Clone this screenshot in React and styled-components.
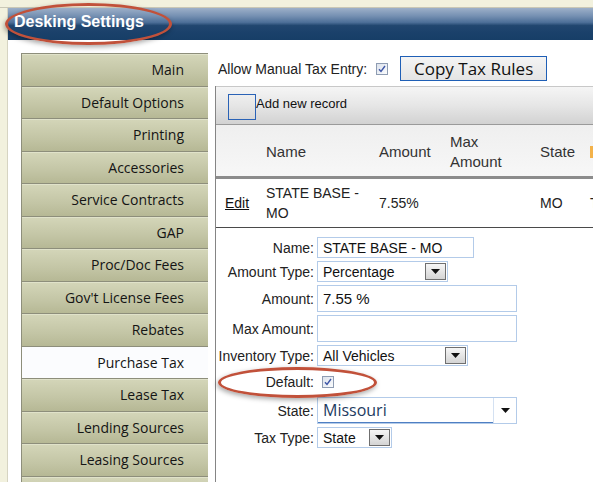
import React from 'react';
import styled, { createGlobalStyle } from 'styled-components';

const menuItems = [
  'Main',
  'Default Options',
  'Printing',
  'Accessories',
  'Service Contracts',
  'GAP',
  'Proc/Doc Fees',
  "Gov't License Fees",
  'Rebates',
  'Purchase Tax',
  'Lease Tax',
  'Lending Sources',
  'Leasing Sources',
  ''
];

const CheckIcon = () => (
  <svg width="8" height="8" viewBox="0 0 8 8">
    <path d="M1 4.2 L3 6.5 L7 1" fill="none" stroke="#3d55a6" strokeWidth="1.4" />
  </svg>
);

const Arrow = () => (
  <svg width="9" height="5" viewBox="0 0 9 5">
    <path d="M0 0 H9 L4.5 5 Z" fill="#111" />
  </svg>
);

const App = () => {
  return (
    <Page>
      <GlobalStyle />
      <TopStrip />
      <Frame>
        <Header>Desking Settings</Header>
        <Body>
          <Sidebar>
            {menuItems.map((item, i) => (
              <MenuItem key={i} $active={item === 'Purchase Tax'}>
                {item}
              </MenuItem>
            ))}
          </Sidebar>
          <Main>
            <TopRow>
              <span>Allow Manual Tax Entry:</span>
              <Checkbox $ml={9}>
                <CheckIcon />
              </Checkbox>
              <CopyButton>Copy Tax Rules</CopyButton>
            </TopRow>
            <Grid>
              <Toolbar>
                <AddBox />
                <span>Add new record</span>
              </Toolbar>
              <HeadRow>
                <Cell />
                <Cell>Name</Cell>
                <Cell>Amount</Cell>
                <Cell>
                  Max
                  <br />
                  Amount
                </Cell>
                <Cell>State</Cell>
                <Cell>
                  <SortMark />
                </Cell>
              </HeadRow>
              <DataRow>
                <EditCell>
                  <EditLink>Edit</EditLink>
                </EditCell>
                <Cell>
                  STATE BASE -
                  <br />
                  MO
                </Cell>
                <Cell>7.55%</Cell>
                <Cell />
                <Cell>MO</Cell>
                <Cell>Tax</Cell>
              </DataRow>
              <Form>
                <Label>Name:</Label>
                <TextBox $w={157} $h={21}>STATE BASE - MO</TextBox>

                <Label>Amount Type:</Label>
                <Select $w={131}>
                  <span>Percentage</span>
                  <DropButton>
                    <Arrow />
                  </DropButton>
                </Select>

                <Label>Amount:</Label>
                <TextBox $w={200} $h={27} $size={15}>7.55 %</TextBox>

                <Label>Max Amount:</Label>
                <TextBox $w={200} $h={27} />

                <Label>Inventory Type:</Label>
                <Select $w={151}>
                  <span>All Vehicles</span>
                  <DropButton>
                    <Arrow />
                  </DropButton>
                </Select>

                <Label>Default:</Label>
                <CheckWrap>
                  <Checkbox $ml={5}>
                    <CheckIcon />
                  </Checkbox>
                </CheckWrap>

                <Label>State:</Label>
                <Combo>
                  <ComboText>Missouri</ComboText>
                  <ComboArrow>
                    <Arrow />
                  </ComboArrow>
                </Combo>

                <Label>Tax Type:</Label>
                <Select $w={75}>
                  <span>State</span>
                  <DropButton>
                    <Arrow />
                  </DropButton>
                </Select>
              </Form>
            </Grid>
          </Main>
        </Body>
      </Frame>
      <Oval $left={5} $top={3} $width={167} $height={42} />
      <Oval $left={218} $top={367} $width={159} $height={31} />
    </Page>
  );
};

const GlobalStyle = createGlobalStyle`
  html, body {
    margin: 0;
    padding: 0;
  }
  body {
    width: 593px;
    height: 482px;
    overflow: hidden;
    background: #f2f1de;
  }
`;

const Page = styled.div`
  position: relative;
  width: 593px;
  height: 482px;
  overflow: hidden;
  display: flex;
  flex-direction: column;
  background: #f2f1de;
  font-family: "Liberation Sans", Arial, sans-serif;
  color: #222;
`;

const TopStrip = styled.div`
  height: 7px;
  flex-shrink: 0;
  border-bottom: 1px solid #c9c7b6;
`;

const Frame = styled.div`
  flex: 1;
  margin-left: 7px;
  border-left: 1px solid #d6d4c2;
  background: #fff;
  display: flex;
  flex-direction: column;
  min-height: 0;
`;

const Header = styled.div`
  height: 32px;
  flex-shrink: 0;
  box-sizing: border-box;
  padding: 4px 0 0 6px;
  line-height: 20px;
  font-size: 16px;
  font-weight: bold;
  color: #fff;
  background: linear-gradient(
    #9db0c9 0%,
    #7590b2 25%,
    #4d6f98 45%,
    #21466f 55%,
    #1b416b 75%,
    #173e67 100%
  );
`;

const Body = styled.div`
  flex: 1;
  display: flex;
  min-height: 0;
`;

const Sidebar = styled.div`
  width: 187px;
  flex-shrink: 0;
  margin: 13px 0 0 13px;
  display: flex;
  flex-direction: column;
  font-family: "Open Sans", "DejaVu Sans", sans-serif;
  font-size: 14px;
`;

const MenuItem = styled.div`
  height: 32.5px;
  flex-shrink: 0;
  box-sizing: border-box;
  border-top: 1px solid #8d8e7b;
  border-left: 1px solid #8d8e7b;
  padding-right: 24px;
  display: flex;
  align-items: center;
  justify-content: flex-end;
  color: #141414;
  background: ${p =>
    p.$active ? '#fbfcfe' : 'linear-gradient(#d4d6b9, #c3c5a5 60%, #b6b895)'};
  box-shadow: ${p => (p.$active ? 'none' : 'inset 0 1px 0 #e0e2ca')};
`;

const Main = styled.div`
  flex: 1;
  min-width: 0;
  padding: 16px 0 0 7px;
  display: flex;
  flex-direction: column;
`;

const TopRow = styled.div`
  height: 25px;
  display: flex;
  align-items: center;
  padding-left: 3px;
  margin-bottom: 5px;
  font-size: 14px;
  color: #222;
`;

const Checkbox = styled.span`
  width: 12px;
  height: 12px;
  box-sizing: border-box;
  margin-left: ${p => p.$ml}px;
  border: 1px solid #8e9cb2;
  background: linear-gradient(135deg, #dce2ec, #fbfcfd);
  display: inline-flex;
  align-items: center;
  justify-content: center;
`;

const CopyButton = styled.div`
  margin-left: 12px;
  width: 147px;
  height: 25px;
  box-sizing: border-box;
  border: 1px solid #1f5fb6;
  background: linear-gradient(#f4f4f4, #e4e4e4);
  display: flex;
  align-items: center;
  justify-content: center;
  font-family: "Open Sans", "DejaVu Sans", sans-serif;
  font-size: 17px;
  color: #111;
`;

const Grid = styled.div`
  flex: 1;
  border-left: 1px solid #858585;
  display: flex;
  flex-direction: column;
`;

const Toolbar = styled.div`
  height: 39px;
  box-sizing: border-box;
  border-top: 1px solid #c8c8c8;
  border-bottom: 1px solid #9a9a9a;
  background: linear-gradient(#f5f5f5, #e6e6e6 50%, #d2d2d2);
  display: flex;
  align-items: flex-start;
  padding: 7px 0 0 12px;
  font-size: 13px;
  color: #111;

  span {
    margin-top: 2px;
  }
`;

const AddBox = styled.div`
  width: 28px;
  height: 26px;
  box-sizing: border-box;
  border: 1px solid #2a62b6;
`;

const columns = '46px 113px 71px 90px 50px 1fr';

const HeadRow = styled.div`
  display: grid;
  grid-template-columns: ${columns};
  height: 54px;
  box-sizing: border-box;
  border-bottom: 3px solid #8c8c8c;
  background: linear-gradient(#efefef, #f7f7f7);
  align-items: center;
  font-size: 15px;
  line-height: 20px;
  color: #333;
  padding-top: 3px;
`;

const Cell = styled.div`
  padding-left: 4px;
  white-space: nowrap;
`;

const SortMark = styled.span`
  display: block;
  width: 4px;
  height: 12px;
  background: #f3b24a;
`;

const DataRow = styled.div`
  display: grid;
  grid-template-columns: ${columns};
  height: 49px;
  box-sizing: border-box;
  border-bottom: 1px solid #4a4a4a;
  align-items: center;
  font-size: 14px;
  line-height: 20px;
  color: #222;
`;

const EditCell = styled.div`
  padding-left: 9px;
`;

const EditLink = styled.span`
  text-decoration: underline;
  color: #111;
`;

const Form = styled.div`
  display: grid;
  grid-template-columns: 98px auto;
  column-gap: 3px;
  row-gap: 3px;
  padding-top: 9px;
  justify-items: start;
  align-items: center;
`;

const Label = styled.div`
  justify-self: end;
  font-size: 14px;
  color: #222;
  white-space: nowrap;
`;

const TextBox = styled.div`
  width: ${p => p.$w}px;
  height: ${p => p.$h}px;
  box-sizing: border-box;
  border: 1px solid #b3cbe9;
  padding-left: 5px;
  display: flex;
  align-items: center;
  font-size: ${p => p.$size || 14}px;
  color: #111;
`;

const Select = styled.div`
  width: ${p => p.$w}px;
  height: 21px;
  box-sizing: border-box;
  border: 1px solid #b3cbe9;
  padding: 0 1px 0 5px;
  display: flex;
  align-items: center;
  justify-content: space-between;
  font-size: 14px;
  color: #111;
`;

const DropButton = styled.div`
  width: 21px;
  height: 17px;
  box-sizing: border-box;
  border: 1px solid #6f6f6f;
  background: linear-gradient(#f6f6f6, #d4d4d4);
  display: flex;
  align-items: center;
  justify-content: center;
`;

const CheckWrap = styled.div`
  height: 25px;
  display: flex;
  align-items: center;
`;

const Combo = styled.div`
  width: 200px;
  height: 27px;
  box-sizing: border-box;
  border: 1px solid #b3cbe9;
  display: flex;
`;

const ComboText = styled.div`
  flex: 1;
  border-bottom: 1px solid #4f7fc3;
  padding-left: 5px;
  display: flex;
  align-items: center;
  font-family: "Open Sans", "DejaVu Sans", sans-serif;
  font-size: 16px;
  color: #1d3b5f;
`;

const ComboArrow = styled.div`
  width: 22px;
  border-left: 1px solid #d4e1f2;
  display: flex;
  align-items: center;
  justify-content: center;
`;

const Oval = styled.div`
  position: absolute;
  left: ${p => p.$left}px;
  top: ${p => p.$top}px;
  width: ${p => p.$width}px;
  height: ${p => p.$height}px;
  box-sizing: border-box;
  border: 3px solid #c1513a;
  border-radius: 50%;
  box-shadow: -1px 2px 5px rgba(0, 0, 0, 0.35);
  pointer-events: none;
`;

export default App;
